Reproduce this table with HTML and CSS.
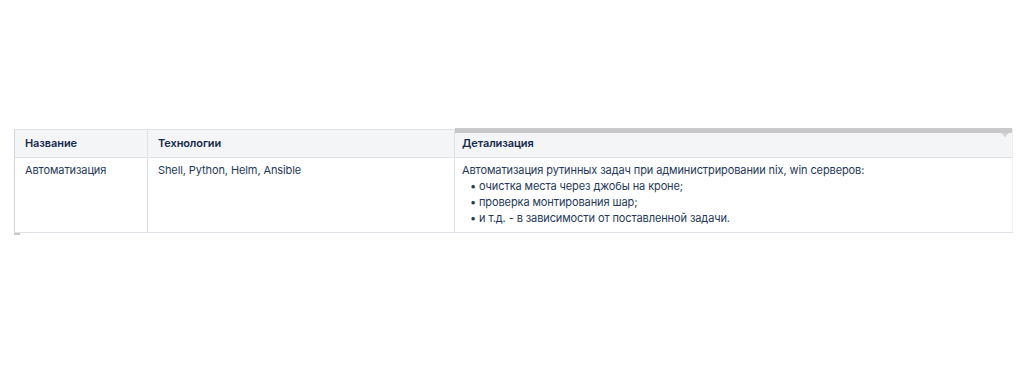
FILE: index.html
```html
<!DOCTYPE html>
<html lang="ru">
<head>
<meta charset="utf-8">
<link rel="stylesheet" href="styles.css">
</head>
<body>
<div class="wrap">
<table class="grid">
<thead>
<tr>
<th class="c1">Название</th>
<th class="c2">Технологии</th>
<th class="c3"><span class="bar"><span class="tri"></span></span>Детализация</th>
</tr>
</thead>
<tbody>
<tr>
<td>Автоматизация</td>
<td>Shell, Python, Helm, Ansible</td>
<td>Автоматизация рутинных задач при администрировании nix, win серверов:
<ul class="list">
<li>очистка места через джобы на кроне;</li>
<li>проверка монтирования шар;</li>
<li>и т.д. - в зависимости от поставленной задачи.</li>
</ul>
</td>
</tr>
</tbody>
</table>
<div class="mark"></div>
</div>
</body>
</html>
```

FILE: styles.css
```css
html, body {
  margin: 0;
  padding: 0;
  background: #ffffff;
}
body {
  font-family: Inter, "Liberation Sans", Arial, sans-serif;
  font-size: 11px;
  letter-spacing: -0.1px;
  color: #253858;
}
.wrap {
  padding: 129px 11px 0 14px;
}
.grid {
  width: 999px;
  border-collapse: collapse;
  table-layout: fixed;
}
.grid th, .grid td {
  border: 1px solid #dfe1e6;
  text-align: left;
  vertical-align: top;
  padding: 0 10px;
}
.grid th {
  background: #f4f5f7;
  color: #172b4d;
  font-weight: 600;
  height: 25px;
  line-height: 27px;
  position: relative;
}
.grid td {
  height: 75px;
  line-height: 16px;
  padding-top: 4px;
  padding-bottom: 0;
  box-sizing: border-box;
}
.grid tr > *:first-child { border-left-color: #d3d6dc; }
.grid tr > *:last-child { border-right-color: #eef0f3; }
.c1 { width: 112px; }
.c2 { width: 286px; }
.c3 { padding-left: 7px !important; }
.grid td:last-child { padding-left: 7px; }
.bar {
  position: absolute;
  left: 0;
  right: 0;
  top: -2px;
  height: 5px;
  background: #c9c9cb;
}
.tri {
  position: absolute;
  right: 3px;
  top: 5px;
  width: 0;
  height: 0;
  border-left: 4px solid transparent;
  border-right: 4px solid transparent;
  border-top: 4px solid #d4d4d6;
}
.list {
  margin: 0;
  padding-left: 17px;
}
.list li {
  list-style: none;
  position: relative;
}
.list li::before {
  content: "•";
  position: absolute;
  left: -9px;
}
.mark {
  width: 6px;
  height: 2px;
  background: #c7c9ce;
}
```
